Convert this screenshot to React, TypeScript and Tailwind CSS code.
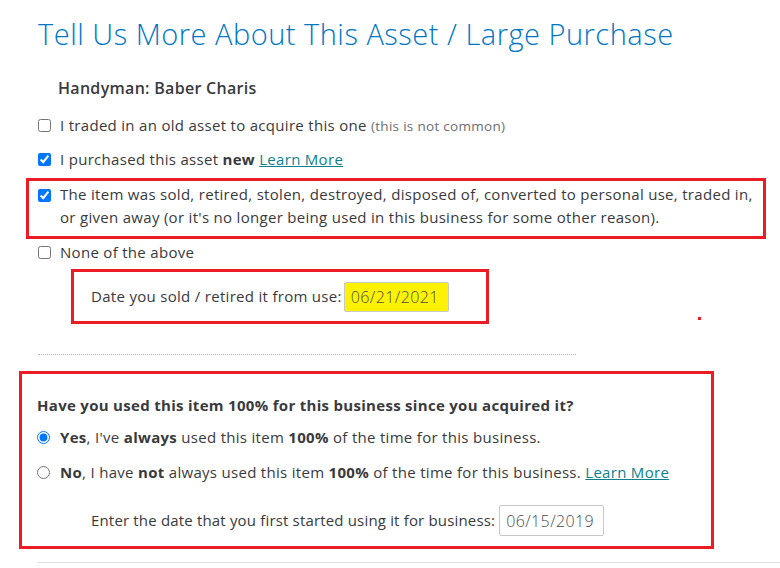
import React from "react";

const red = "border-[3px] border-[#ec1c24]";

function Check({ checked, children }: { checked?: boolean; children: React.ReactNode }) {
  return (
    <label className="flex h-[34px] items-center">
      <input type="checkbox" defaultChecked={checked} className="m-0 h-[13px] w-[13px] shrink-0" />
      <span className="ml-[9px]">{children}</span>
    </label>
  );
}

function Radio({ checked, children }: { checked?: boolean; children: React.ReactNode }) {
  return (
    <label className="flex h-[35px] items-center">
      <input type="radio" name="full" defaultChecked={checked} className="m-0 h-[13px] w-[13px] shrink-0" />
      <span className="ml-[10px]">{children}</span>
    </label>
  );
}

export default function App() {
  return (
    <main
      className="relative h-[568px] w-[780px] overflow-hidden bg-white text-[15px] tracking-[0.3px] text-[#393a3d]"
      style={{ fontFamily: '"Open Sans", "Noto Sans", sans-serif' }}
    >
      <div className="pl-[38px] pt-[14px]">
        <h1 className="text-[29px] font-light leading-[40px] tracking-[0.5px] text-[#0077c5]">
          Tell Us More About This Asset / Large Purchase
        </h1>
        <p className="ml-[20px] mt-[22px] text-[16px] font-semibold leading-[24px]">Handyman: Baber Charis</p>

        <div className="mt-[8px]">
          <Check>
            I traded in an old asset to acquire this one{" "}
            <span className="text-[13.5px] tracking-[0.3px] text-[#6b6c72]">(this is not common)</span>
          </Check>
          <Check checked>
            I purchased this asset <b>new</b>{" "}
            <a className="text-[#0d7f8f] underline">Learn More</a>
          </Check>
        </div>

        <div className={`ml-[-12px] mt-[2px] flex h-[61px] w-[740px] items-start pl-[9px] pt-[2px] ${red}`}>
          <input type="checkbox" defaultChecked className="m-0 mt-[6px] h-[13px] w-[13px] shrink-0" />
          <p className="ml-[9px] leading-[23px]">
            The item was sold, retired, stolen, destroyed, disposed of, converted to personal use, traded in,
            or given away (or it's no longer being used in this business for some other reason).
          </p>
        </div>

        <label className="flex h-[26px] items-center">
          <input type="checkbox" className="m-0 h-[13px] w-[13px] shrink-0" />
          <span className="ml-[9px]">None of the above</span>
        </label>

        <div className={`ml-[33px] mt-[4px] flex h-[55px] w-[418px] items-center pl-[17px] ${red}`}>
          <span>Date you sold / retired it from use:</span>
          <span className="ml-[2px] flex h-[30px] w-[105px] items-center rounded-[2px] border border-[#c8c8c8] bg-[#fff200] pl-[6px] text-[16px] font-light tracking-[0.4px] text-[#4a4b50]">
            06/21/2021
          </span>
        </div>

        <div className="mt-[30px] w-[538px] border-t border-dotted border-[#b8b8b8]" />
      </div>

      <div className="absolute left-[698px] top-[317px] h-[3px] w-[3px] bg-[#ec1c24]" />

      <div className={`ml-[19px] mt-[16px] h-[178px] w-[695px] pl-[15px] pt-[20px] ${red}`}>
        <p className="text-[15px] font-bold leading-[22px]">
          Have you used this item 100% for this business since you acquired it?
        </p>
        <div className="mt-[4px]">
          <Radio checked>
            <b>Yes</b>, I've <b>always</b> used this item <b>100%</b> of the time for this business.
          </Radio>
          <Radio>
            <b>No</b>, I have <b>not</b> always used this item <b>100%</b> of the time for this business.{" "}
            <a className="text-[#0d7f8f] underline">Learn More</a>
          </Radio>
        </div>
        <div className="ml-[54px] mt-[15px] flex items-center">
          <span className="tracking-[0.17px]">Enter the date that you first started using it for business:</span>
          <span className="ml-[4px] flex h-[31px] w-[105px] items-center rounded-[2px] border border-[#c8c8c8] bg-white pl-[6px] text-[16px] font-light tracking-[0.4px] text-[#4a4b50]">
            06/15/2019
          </span>
        </div>
      </div>

      <div className="ml-[37px] mt-[13px] border-t border-[#e3e3e3]" />
    </main>
  );
}
